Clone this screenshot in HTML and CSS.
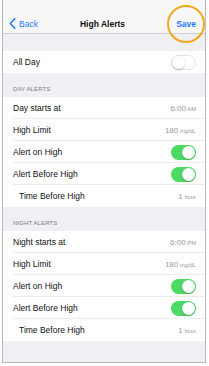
FILE: index.html
```html
<!DOCTYPE html>
<html>
<head>
<meta charset="utf-8">
<link rel="stylesheet" href="styles.css">
</head>
<body>
<div class="frame">
  <div class="nav">
    <div class="back">
      <svg class="chev" width="7" height="11" viewBox="0 0 7 11"><path d="M5.8 0.8 L1.3 5.5 L5.8 10.2" fill="none" stroke="#1a7cf5" stroke-width="1.6" stroke-linecap="round" stroke-linejoin="round"/></svg>
      <span>Back</span>
    </div>
    <div class="title">High Alerts</div>
    <div class="save">Save</div>
    <span class="ring"></span>
  </div>
  <div class="spacer"></div>
  <div class="group">
    <div class="row"><span class="label">All Day</span><span class="toggle off"><span class="knob"></span></span></div>
  </div>
  <div class="header">DAY ALERTS</div>
  <div class="group">
    <div class="row sep"><span class="label">Day starts at</span><span class="value">6:00<small> AM</small></span></div>
    <div class="row sep"><span class="label">High Limit</span><span class="value">180<small> mg/dL</small></span></div>
    <div class="row sep"><span class="label">Alert on High</span><span class="toggle on"><span class="knob"></span></span></div>
    <div class="row sep"><span class="label">Alert Before High</span><span class="toggle on"><span class="knob"></span></span></div>
    <div class="row"><span class="label indent">Time Before High</span><span class="value">1<small> hour</small></span></div>
  </div>
  <div class="header">NIGHT ALERTS</div>
  <div class="group">
    <div class="row sep"><span class="label">Night starts at</span><span class="value">6:00<small> PM</small></span></div>
    <div class="row sep"><span class="label">High Limit</span><span class="value">180<small> mg/dL</small></span></div>
    <div class="row sep"><span class="label">Alert on High</span><span class="toggle on"><span class="knob"></span></span></div>
    <div class="row sep"><span class="label">Alert Before High</span><span class="toggle on"><span class="knob"></span></span></div>
    <div class="row"><span class="label indent">Time Before High</span><span class="value">1<small> hour</small></span></div>
  </div>
  <div class="fill"></div>
</div>
</body>
</html>
```

FILE: styles.css
```css
* { box-sizing: border-box; }
html, body { margin: 0; padding: 0; background: #fff; }
body { font-family: "Liberation Sans", Arial, sans-serif; color: #111; }

.frame {
  margin-left: 2px;
  width: 204px;
  height: 363px;
  border: 1px solid #b9b9bd;
  border-top: none;
  background: #efeff4;
  display: flex;
  flex-direction: column;
  overflow: hidden;
}

.nav {
  position: relative;
  height: 34px;
  flex: none;
  background: #f7f7f8;
  border-bottom: 1px solid #cfcfd3;
  padding: 14px 9px 0 6px;
  display: flex;
  align-items: center;
  justify-content: space-between;
  font-size: 8.5px;
}
.back, .title, .save { height: 20px; display: flex; align-items: center; }
.back { color: #1a7cf5; gap: 3px; width: 40px; }
.chev { display: block; }
.title { font-weight: bold; color: #111; }
.save { font-weight: bold; color: #1a7cf5; width: 40px; justify-content: flex-end; }
.ring {
  position: absolute;
  left: 164px;
  top: 5px;
  width: 38px;
  height: 38px;
  border: 2px solid #f4a719;
  border-radius: 50%;
  z-index: 2;
}

.spacer { height: 17px; flex: none; }

.group { background: #fff; flex: none; }
.row {
  position: relative;
  height: 22px;
  display: flex;
  align-items: center;
  justify-content: space-between;
  padding: 0 9px 0 10px;
  font-size: 8.5px;
}
.row.sep::after {
  content: "";
  position: absolute;
  left: 10px;
  right: 0;
  bottom: 0;
  height: 1px;
  background: #ececef;
}
.label { color: #111; }
.label.indent { padding-left: 6px; }
.value { color: #9a9a9e; font-size: 8px; }
.value small { font-size: 5.8px; }

.header {
  height: 24px;
  flex: none;
  display: flex;
  align-items: flex-end;
  padding: 0 0 5px 10px;
  font-size: 6px;
  color: #7b7b80;
  letter-spacing: 0.1px;
}

.toggle {
  position: relative;
  width: 25px;
  height: 15px;
  border-radius: 8px;
  flex: none;
}
.toggle.on { background: #4cd964; }
.toggle.off { background: #fff; border: 1px solid #e2e2e5; }
.knob {
  position: absolute;
  top: 1px;
  width: 13px;
  height: 13px;
  border-radius: 50%;
  background: #fff;
  box-shadow: 0 1px 2px rgba(0,0,0,0.25);
}
.toggle.on .knob { right: 1px; }
.toggle.off .knob { left: 0; top: 0; }

.fill { flex: 1; }
```
